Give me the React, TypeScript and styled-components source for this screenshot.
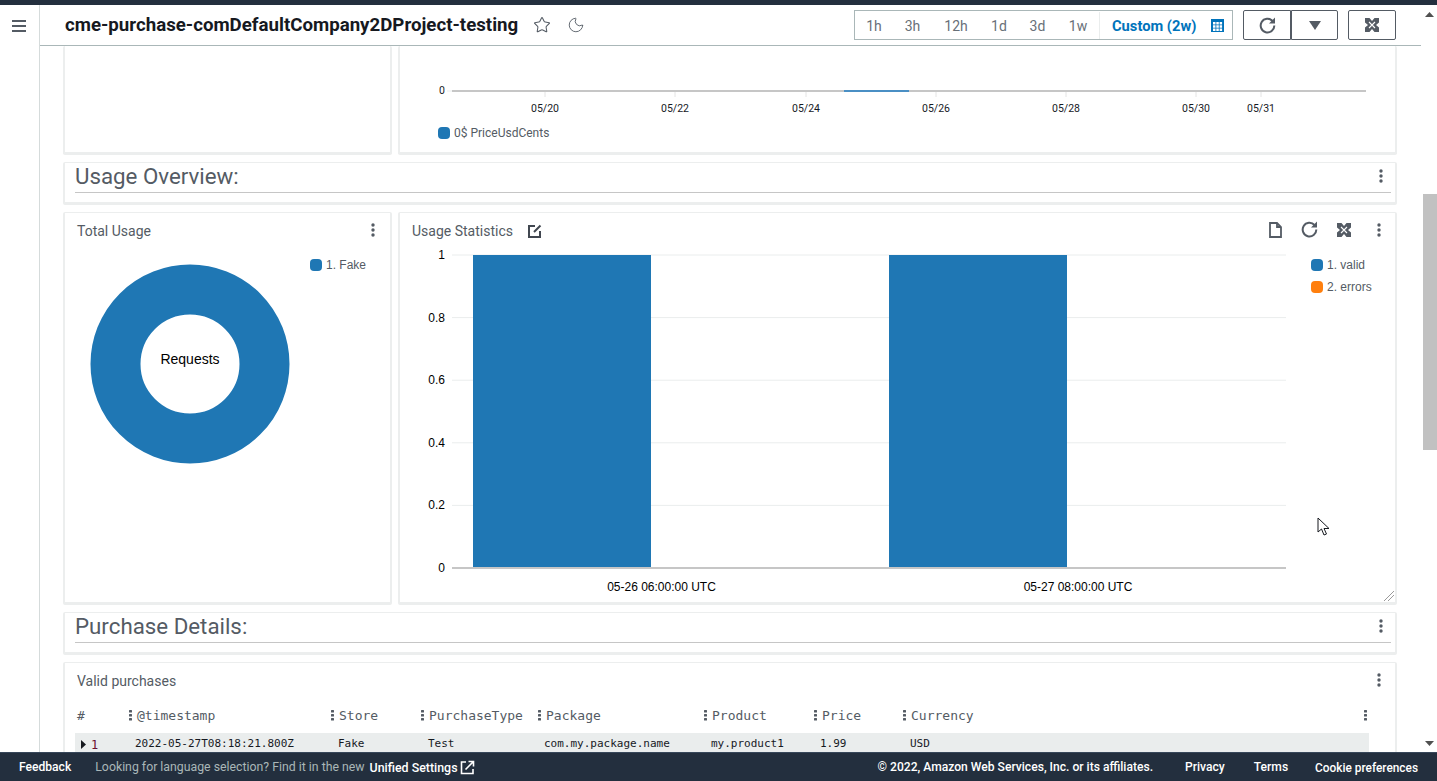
import React from 'react'
import styled, { createGlobalStyle } from 'styled-components'
import { Moon, Star } from 'lucide-react'

const GlobalStyle = createGlobalStyle`
  html, body {
    margin: 0;
    height: 100%;
    overflow: hidden;
    background: #fff;
    font-family: Roboto, "Liberation Sans", sans-serif;
  }
  * {
    box-sizing: border-box;
  }
`

const Page = styled.div`
  position: relative;
  display: flex;
  flex-direction: column;
  width: 1437px;
  height: 781px;
  overflow: hidden;
`
const TopStrip = styled.div`
  flex: 0 0 5px;
  background: #232f3e;
`
const Shell = styled.div`
  flex: 1;
  min-height: 0;
  display: flex;
`
const Rail = styled.div`
  flex: 0 0 40px;
  border-right: 1px solid #d5dbdb;
  padding: 15px 0 0 12px;
`
const Hamburger = styled.svg`
  display: block;
`
const Column = styled.div`
  flex: 1;
  min-width: 0;
  margin-right: 2px;
  display: flex;
  flex-direction: column;
`
const Header = styled.header`
  flex: 0 0 41px;
  display: flex;
  align-items: center;
  padding: 0 25px 0 25px;
  border-bottom: 1px solid #aab7b8;
`
const Title = styled.h1`
  margin: 0 15px 0 0;
  font-size: 18.68px;
  font-weight: 700;
  color: #16191f;
  white-space: nowrap;
`
const HeaderIcon = styled.span`
  display: flex;
  margin-right: 16px;
  color: #545b64;
`
const TimeRange = styled.div`
  display: flex;
  align-items: center;
  width: 379px;
  height: 30px;
  margin-left: auto;
  padding-top: 1px;
  border: 1px solid #aab7b8;
  font-size: 14px;
  color: #687078;
`
const RangeItem = styled.span<{ $width: number }>`
  width: ${p => p.$width}px;
  text-align: center;
`
const CustomRange = styled.span`
  display: flex;
  align-items: center;
  justify-content: space-between;
  flex: 1;
  height: 100%;
  padding-left: 12px;
  padding-right: 8px;
  border-left: 1px solid #eaeded;
  font-size: 14.7px;
  color: #0073bb;
  font-weight: 700;
`
const ToolButton = styled.button<{ $gap?: number; $round?: string; $width: number }>`
  display: flex;
  align-items: center;
  justify-content: center;
  width: ${p => p.$width}px;
  height: 30px;
  margin-left: ${p => p.$gap ?? 0}px;
  padding: 0;
  border: 1px solid #545b64;
  border-radius: ${p => p.$round ?? '2px'};
  background: #fff;
  color: #545b64;
`
const Main = styled.main`
  flex: 1;
  min-height: 0;
  overflow: hidden;
  padding: 0 24px 0 23px;
  display: flex;
  flex-direction: column;
  gap: 7px;
`
const Grid = styled.div<{ $height: number }>`
  flex: 0 0 ${p => p.$height}px;
  display: grid;
  grid-template-columns: 329px 999px;
  gap: 6px;
`
const Card = styled.section<{ $open?: boolean }>`
  position: relative;
  background: #fff;
  border: 2px solid #eceeee;
  border-top-width: ${p => (p.$open ? 0 : 1)}px;
  border-bottom-width: 3px;
  border-radius: 2px;
`
const SectionCard = styled(Card)`
  flex: 0 0 43px;
  padding: 0 4px 0 10px;
`
const SectionTitle = styled.div`
  display: flex;
  align-items: center;
  justify-content: space-between;
  height: 30px;
  padding: 0 7px 3px 0;
  border-bottom: 1px solid #c6c6c6;
  font-size: 22.3px;
  color: #545b64;
`
const CardHeader = styled.div<{ $right?: number }>`
  display: flex;
  align-items: center;
  height: 36px;
  padding: 0 ${p => p.$right ?? 13}px 0 12px;
  font-size: 14px;
  color: #545b64;
`
const CardTitle = styled.span`
  margin-right: 15px;
`
const CardTools = styled.div`
  display: flex;
  align-items: center;
  gap: 19px;
  margin-left: auto;
  padding-bottom: 3px;
  color: #545b64;
`
const LastTool = styled.span`
  display: flex;
  margin-left: 6px;
`
const LegendItem = styled.div`
  display: flex;
  align-items: center;
  gap: 4px;
  height: 22px;
  font-family: "Liberation Sans", sans-serif;
  font-size: 12px;
  color: #545b64;
`
const Swatch = styled.i<{ $color: string }>`
  width: 12px;
  height: 12px;
  border-radius: 4px;
  background: ${p => p.$color};
`
const PriceLegend = styled(LegendItem)`
  margin: 6px 0 0 38px;
  font-family: Roboto, sans-serif;
`
const DonutBody = styled.div`
  position: relative;
  display: flex;
  justify-content: flex-end;
  padding: 5px 24px 0 0;
`
const Donut = styled.svg`
  position: absolute;
  top: 15px;
  left: 25px;
`
const ChartBody = styled.div`
  display: flex;
`
const BarLegend = styled.div`
  padding: 5px 0 0 6px;
`
const Resize = styled.svg`
  position: absolute;
  right: 0;
  bottom: 0;
`
const TableCard = styled(Card)`
  flex: 0 0 120px;
`
const TableWrap = styled.div`
  padding: 4px 26px 0 10px;
`
const columns = '53px 202px 90px 117px 166px 110px 89px 1fr'
const HeadRow = styled.div`
  display: grid;
  grid-template-columns: ${columns};
  align-items: center;
  height: 24px;
  font-family: "DejaVu Sans Mono", monospace;
  font-size: 13px;
  color: #545b64;
`
const HeadCell = styled.span`
  display: flex;
  align-items: center;
  gap: 4px;
  white-space: nowrap;
`
const HashCell = styled.span`
  padding-left: 2px;
`
const LastHeadCell = styled.span`
  display: flex;
  align-items: center;
  justify-content: space-between;
  padding-right: 1px;
`
const BodyRow = styled.div`
  display: grid;
  grid-template-columns: ${columns};
  align-items: center;
  height: 20px;
  margin-top: 6px;
  background: #eaeded;
  font-family: "DejaVu Sans Mono", monospace;
  font-size: 11px;
  color: #16191f;
`
const BodyCell = styled.span<{ $pad?: number }>`
  padding-left: ${p => p.$pad ?? 8}px;
  white-space: nowrap;
`
const RowIndex = styled.span`
  display: flex;
  align-items: center;
  gap: 5px;
  padding: 3px 0 0 6px;
  font-size: 12px;
  color: #6b1030;
`
const Footer = styled.footer`
  flex: 0 0 29px;
  display: flex;
  align-items: center;
  background: #232f3e;
  border-top: 1px solid #37475a;
  font-size: 12.1px;
  color: #fff;
`
const FootLink = styled.span<{ $left?: number; $right?: number }>`
  margin-left: ${p => p.$left ?? 0}px;
  margin-right: ${p => p.$right ?? 0}px;
  font-weight: 500;
  white-space: nowrap;
`
const CookieLink = styled(FootLink)`
  padding-top: 2px;
  font-size: 11.87px;
`
const FootNote = styled.span`
  margin-left: 24px;
  font-size: 12.3px;
  color: #aab7b8;
  white-space: nowrap;
`
const FootSettings = styled.span`
  display: flex;
  align-items: center;
  gap: 2px;
  margin-left: 5px;
  margin-right: auto;
  font-size: 12.4px;
  font-weight: 500;
  white-space: nowrap;
`
const Scrollbar = styled.div`
  flex: 0 0 14px;
  display: flex;
  flex-direction: column;
  align-items: center;
  padding: 7px 0 0;
  background: #fff;
`
const ScrollArrow = styled.svg<{ $gap?: number }>`
  flex: none;
  margin: ${p => p.$gap ?? 0}px 2px 0 0;
`
const Thumb = styled.div`
  align-self: stretch;
  height: 256px;
  margin-top: 177px;
  background: #c1c1c1;
`
const Pointer = styled.svg`
  position: absolute;
  left: 1317px;
  top: 517px;
`

const Dots = () => (
  <svg width="6" height="14" viewBox="0 0 6 14" fill="currentColor">
    <circle cx="3" cy="2" r="1.7" />
    <circle cx="3" cy="7" r="1.7" />
    <circle cx="3" cy="12" r="1.7" />
  </svg>
)

const ColDots = () => (
  <svg width="5" height="11" viewBox="0 0 5 11" fill="#545b64">
    <rect x="1" y="0" width="3" height="2.500" rx="0.5" />
    <rect x="1" y="4" width="3" height="2.500" rx="0.5" />
    <rect x="1" y="8" width="3" height="2.500" rx="0.5" />
  </svg>
)

const Refresh = () => (
  <svg width="17" height="17" viewBox="0 0 17 17" fill="none" stroke="currentColor" strokeWidth="2">
    <path d="M13.500 4A6.800 6.800 0 1 0 15.300 8.500" />
    <path d="M16 0.500v6h-6z" fill="currentColor" stroke="none" />
  </svg>
)

const Fullscreen = () => (
  <svg width="14" height="14" viewBox="0 0 14 14">
    <rect width="14" height="14" fill="currentColor" />
    <path d="M4 4l6 6M10 4l-6 6" stroke="#fff" strokeWidth="1.100" />
    <path d="M4.500 0h5L7 3zM4.500 14h5L7 11zM0 4.500v5L3 7zM14 4.500v5L11 7z" fill="#fff" />
  </svg>
)

const Calendar = () => (
  <svg width="13" height="13" viewBox="0 0 13 13">
    <rect width="13" height="13" fill="#0073bb" />
    <path d="M2 3h2.500v2.500H2zM5.300 3h2.500v2.500H5.300zM8.600 3h2.500v2.500H8.600zM2 6.200h2.500v2.500H2zM5.300 6.200h2.500v2.500H5.300zM8.600 6.200h2.500v2.500H8.600zM2 9.400h2.500V12H2zM5.300 9.400h2.500V12H5.300zM8.600 9.400h2.500V12H8.600z" fill="#fff" />
  </svg>
)

const xTicks = [
  { x: 545, label: '05/20' },
  { x: 675, label: '05/22' },
  { x: 806, label: '05/24' },
  { x: 936, label: '05/26' },
  { x: 1066, label: '05/28' },
  { x: 1196, label: '05/30' },
  { x: 1261, label: '05/31' },
]

const PriceChart = () => (
  <svg width="995" height="70" viewBox="400 46 995 70" style={{ display: 'block' }} fontFamily="Roboto, sans-serif" fontSize="10.500" fill="#16191f">
    <text x="445" y="94" textAnchor="end">0</text>
    <line x1="447" x2="452" y1="91" y2="91" stroke="#eaeded" />
    <line x1="452" x2="1366" y1="91" y2="91" stroke="#c6c6c6" strokeWidth="2" />
    <line x1="844" x2="909" y1="91" y2="91" stroke="#4a8fc4" strokeWidth="2" />
    {xTicks.map(t => (
      <g key={t.label}>
        <line x1={t.x} x2={t.x} y1="92" y2="97" stroke="#e4e4e4" />
        <text x={t.x} y="112" textAnchor="middle">{t.label}</text>
      </g>
    ))}
  </svg>
)

const yTicks = [
  { y: 255, label: '1' },
  { y: 317.600, label: '0.8' },
  { y: 380.200, label: '0.6' },
  { y: 442.800, label: '0.4' },
  { y: 505.400, label: '0.2' },
]

const UsageChart = () => (
  <svg width="905" height="352" viewBox="400 249 905 352" style={{ display: 'block' }} fontFamily="Liberation Sans, sans-serif" fontSize="12" fill="#000">
    {yTicks.map(t => (
      <g key={t.label}>
        <line x1="452" x2="1286" y1={t.y} y2={t.y} stroke="#eaeded" />
        <text x="445" y={t.y + 4} textAnchor="end">{t.label}</text>
      </g>
    ))}
    <text x="445" y="572" textAnchor="end">0</text>
    <rect x="473" y="255" width="178" height="313" fill="#1f77b4" />
    <rect x="889" y="255" width="178" height="313" fill="#1f77b4" />
    <line x1="452" x2="1286" y1="568" y2="568" stroke="#c6c6c6" strokeWidth="2" />
    <text x="661.500" y="591" textAnchor="middle">05-26 06:00:00 UTC</text>
    <text x="1078" y="591" textAnchor="middle">05-27 08:00:00 UTC</text>
  </svg>
)

const App = () => {
  return (
    <Page>
      <GlobalStyle />
      <TopStrip />
      <Shell>
        <Rail>
          <Hamburger width="14" height="12" viewBox="0 0 14 12" fill="#545b64">
            <rect width="14" height="2" />
            <rect y="5" width="14" height="2" />
            <rect y="10" width="14" height="2" />
          </Hamburger>
        </Rail>
        <Column>
          <Header>
            <Title>cme-purchase-comDefaultCompany2DProject-testing</Title>
            <HeaderIcon><Star size={18} strokeWidth={1.4} /></HeaderIcon>
            <HeaderIcon><Moon size={18} strokeWidth={1.2} /></HeaderIcon>
            <TimeRange>
              <RangeItem $width={38}>1h</RangeItem>
              <RangeItem $width={39}>3h</RangeItem>
              <RangeItem $width={48}>12h</RangeItem>
              <RangeItem $width={38}>1d</RangeItem>
              <RangeItem $width={39}>3d</RangeItem>
              <RangeItem $width={42}>1w</RangeItem>
              <CustomRange>Custom (2w)<Calendar /></CustomRange>
            </TimeRange>
            <ToolButton $gap={10} $width={48} $round="2px 0 0 2px"><Refresh /></ToolButton>
            <ToolButton $width={47} $round="0 2px 2px 0">
              <svg width="12" height="9" viewBox="0 0 12 9" fill="currentColor"><path d="M0 0h12L6 9z" /></svg>
            </ToolButton>
            <ToolButton $gap={10} $width={48}><Fullscreen /></ToolButton>
          </Header>
          <Main>
            <Grid $height={109}>
              <Card $open />
              <Card $open>
                <PriceChart />
                <PriceLegend><Swatch $color="#1f77b4" />0$ PriceUsdCents</PriceLegend>
              </Card>
            </Grid>
            <SectionCard>
              <SectionTitle>Usage Overview:<Dots /></SectionTitle>
            </SectionCard>
            <Grid $height={393}>
              <Card>
                <CardHeader $right={14}>
                  <CardTitle>Total Usage</CardTitle>
                  <CardTools><Dots /></CardTools>
                </CardHeader>
                <DonutBody>
                  <Donut width="200" height="200" viewBox="0 0 200 200">
                    <circle cx="100" cy="100" r="74.500" fill="none" stroke="#1f77b4" strokeWidth="50" />
                    <text x="100" y="100" textAnchor="middle" fontFamily="Liberation Sans, sans-serif" fontSize="14" fill="#000">Requests</text>
                  </Donut>
                  <LegendItem><Swatch $color="#1f77b4" />1. Fake</LegendItem>
                </DonutBody>
              </Card>
              <Card>
                <CardHeader>
                  <CardTitle>Usage Statistics</CardTitle>
                  <svg width="14" height="14" viewBox="0 0 14 14" fill="none" stroke="#414750" strokeWidth="2">
                    <path d="M7 2H1v11h11V7" />
                    <path d="M12.500 1.500L6 8" />
                  </svg>
                  <CardTools>
                    <svg width="13" height="16" viewBox="0 0 13 16" fill="none" stroke="#545b64" strokeWidth="1.800">
                      <path d="M1 1h7l4 4v10H1z" />
                      <path d="M8 1v4h4" />
                    </svg>
                    <Refresh />
                    <Fullscreen />
                    <LastTool><Dots /></LastTool>
                  </CardTools>
                </CardHeader>
                <ChartBody>
                  <UsageChart />
                  <BarLegend>
                    <LegendItem><Swatch $color="#1f77b4" />1. valid</LegendItem>
                    <LegendItem><Swatch $color="#ff7f0e" />2. errors</LegendItem>
                  </BarLegend>
                </ChartBody>
                <Resize width="12" height="12" viewBox="0 0 12 12" stroke="#9a9a9a" fill="none">
                  <path d="M1 11L11 1M5 11l6-6" />
                </Resize>
              </Card>
            </Grid>
            <SectionCard>
              <SectionTitle>Purchase Details:<Dots /></SectionTitle>
            </SectionCard>
            <TableCard>
              <CardHeader>
                <CardTitle>Valid purchases</CardTitle>
                <CardTools><Dots /></CardTools>
              </CardHeader>
              <TableWrap>
                <HeadRow>
                  <HashCell>#</HashCell>
                  <HeadCell><ColDots />@timestamp</HeadCell>
                  <HeadCell><ColDots />Store</HeadCell>
                  <HeadCell><ColDots />PurchaseType</HeadCell>
                  <HeadCell><ColDots />Package</HeadCell>
                  <HeadCell><ColDots />Product</HeadCell>
                  <HeadCell><ColDots />Price</HeadCell>
                  <LastHeadCell><HeadCell><ColDots />Currency</HeadCell><ColDots /></LastHeadCell>
                </HeadRow>
                <BodyRow>
                  <RowIndex>
                    <svg width="5" height="9" viewBox="0 0 5 9" fill="#16191f"><path d="M0 0l5 4.500L0 9z" /></svg>
                    1
                  </RowIndex>
                  <BodyCell $pad={7}>2022-05-27T08:18:21.800Z</BodyCell>
                  <BodyCell>Fake</BodyCell>
                  <BodyCell>Test</BodyCell>
                  <BodyCell $pad={7}>com.my.package.name</BodyCell>
                  <BodyCell>my.product1</BodyCell>
                  <BodyCell $pad={7}>1.99</BodyCell>
                  <BodyCell>USD</BodyCell>
                </BodyRow>
              </TableWrap>
            </TableCard>
          </Main>
        </Column>
        <Scrollbar>
          <ScrollArrow width="9" height="5" viewBox="0 0 9 5" fill="#505050"><path d="M4.500 0L9 5H0z" /></ScrollArrow>
          <Thumb />
          <ScrollArrow $gap={291} width="9" height="5" viewBox="0 0 9 5" fill="#505050"><path d="M0 0h9L4.500 5z" /></ScrollArrow>
        </Scrollbar>
      </Shell>
      <Footer>
        <FootLink $left={19}>Feedback</FootLink>
        <FootNote>Looking for language selection? Find it in the new</FootNote>
        <FootSettings>
          Unified Settings
          <svg width="15" height="15" viewBox="0 0 15 15" fill="none" stroke="#fff" strokeWidth="1.600">
            <path d="M6 2H1.500v11.500H13V9" />
            <path d="M5.500 9.500L13 2M8.500 1.500h5v5" />
          </svg>
        </FootSettings>
        <FootLink $right={32}>© 2022, Amazon Web Services, Inc. or its affiliates.</FootLink>
        <FootLink $right={29}>Privacy</FootLink>
        <FootLink $right={27}>Terms</FootLink>
        <CookieLink $right={19}>Cookie preferences</CookieLink>
      </Footer>
      <Pointer width="13" height="20" viewBox="0 0 13 20" fill="#fff" stroke="#16191f">
        <path d="M1 1v14l3.500-3 2.500 6 2.500-1-2.500-5.500H12z" />
      </Pointer>
    </Page>
  )
}

export default App
